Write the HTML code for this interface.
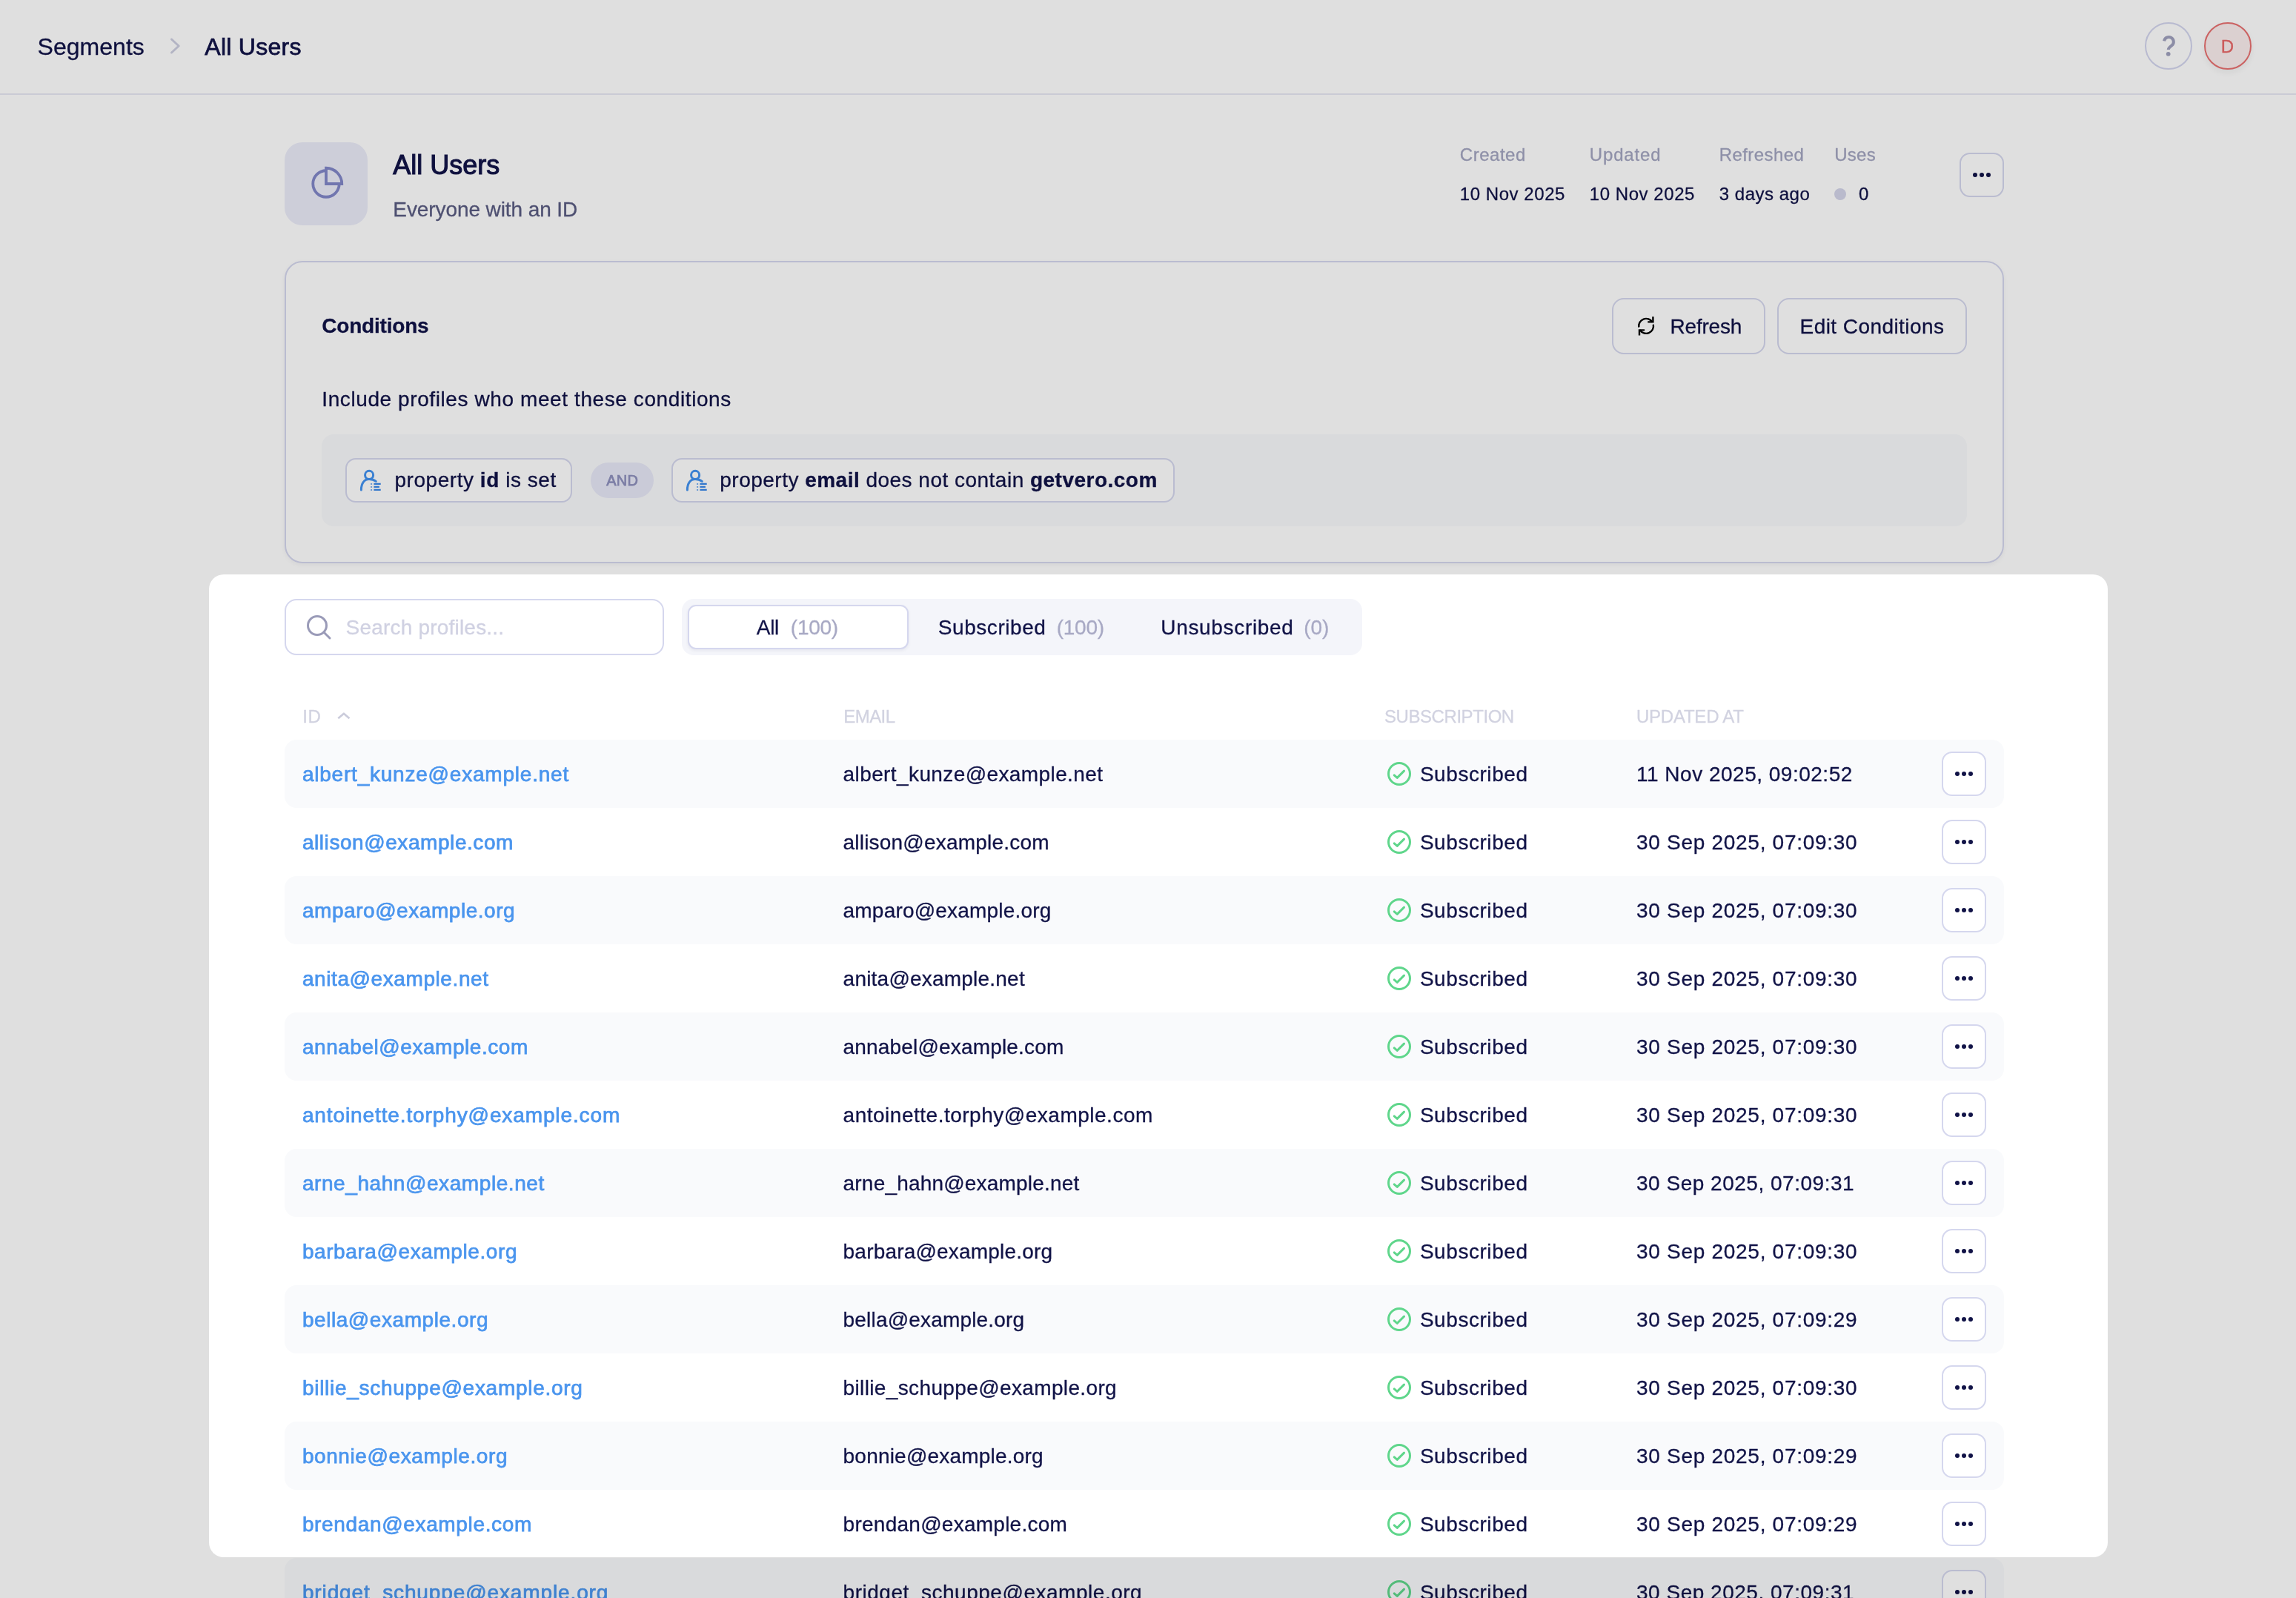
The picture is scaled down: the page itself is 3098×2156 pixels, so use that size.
<!DOCTYPE html>
<html><head><meta charset="utf-8"><title>All Users</title>
<style>
html,body{margin:0;padding:0;}
#root{position:absolute;left:0;top:0;width:3098px;height:2156px;will-change:transform;}
body{width:3098px;height:2156px;overflow:hidden;position:relative;background:#fff;font-family:"Liberation Sans",sans-serif;color:#111347;}
.t{position:absolute;white-space:pre;-webkit-text-stroke:0.3px currentColor;}
.abs{position:absolute;box-sizing:border-box;}
.med{-webkit-text-stroke:0.75px currentColor;}
.bold{font-weight:700;}
.semi{-webkit-text-stroke:1.1px currentColor;}
svg{position:absolute;overflow:visible;}
.btn{position:absolute;box-sizing:border-box;border:2px solid #d5d7ee;border-radius:14px;background:#fff;}
.dots i{position:absolute;width:6.4px;height:6.4px;border-radius:50%;background:#111347;}
.row{position:absolute;left:384px;width:2320px;height:92px;border-radius:16px;}
.row.s{background:#f9fafc;}
.pill{position:absolute;box-sizing:border-box;border:2px solid #d5d7ee;border-radius:14px;top:618px;height:60px;background:#fff;}
</style></head><body><div id="root">

<div class="abs" style="left:0;top:0;width:3098px;height:128px;border-bottom:2px solid #e7e8f4;background:#fff"></div>
<div class="t " style="left:50.6px;top:46.91px;font-size:32px;line-height:32px;letter-spacing:0.017px;">Segments</div>
<svg style="left:226px;top:48px" width="22" height="28" viewBox="0 0 22 28" fill="none"><path d="M5.5 5 L15.2 14 L5.5 23" stroke="#cdcee0" stroke-width="3" stroke-linecap="round" stroke-linejoin="round"/></svg>
<div class="t med" style="left:276.3px;top:46.91px;font-size:32px;line-height:32px;letter-spacing:0.273px;">All Users</div>
<div class="abs" style="left:2894px;top:30px;width:64px;height:64px;border-radius:50%;border:2px solid #d3d5ee;"></div>
<svg style="left:2906px;top:40px" width="40" height="44" viewBox="2906 40 40 44" fill="none"><path d="M2920.1 55.4 A6.4 6.4 0 1 1 2930.6 61.2 C2927.6 63.4 2925.8 64.4 2925.8 67" stroke="#a0a2be" stroke-width="4" stroke-linecap="butt"/><circle cx="2925.7" cy="72.8" r="2.9" fill="#a0a2be"/></svg>
<div class="abs" style="left:2974px;top:30px;width:64px;height:64px;border-radius:50%;border:2px solid #e87070;background:#fbeeee;box-shadow:0 4px 8px rgba(0,0,0,0.06)"></div>
<div class="t " style="left:2973.3px;top:50.68px;font-size:24px;line-height:24px;color:#e96868;width:64px;text-align:center;">D</div>
<div class="abs" style="left:384px;top:192px;width:112px;height:112px;border-radius:24px;background:#ebecf9;"></div>
<svg style="left:410px;top:218px" width="60" height="60" viewBox="410 218 60 60" fill="none" stroke="#8287c8" stroke-width="3.8" stroke-linejoin="miter"><path d="M440 230.25 A17.75 17.75 0 1 0 457.75 248"/><path d="M440 248 V226.75 A21.25 21.25 0 0 1 461.25 248 Z"/></svg>
<div class="t semi" style="left:530.3px;top:204.53px;font-size:36px;line-height:36px;letter-spacing:-0.004px;">All Users</div>
<div class="t " style="left:530.3px;top:268.80px;font-size:28px;line-height:28px;letter-spacing:-0.088px;color:#5a5c82;">Everyone with an ID</div>
<div class="t " style="left:1969.8px;top:196.88px;font-size:24px;line-height:24px;letter-spacing:0.518px;color:#a3a5c0;">Created</div>
<div class="t " style="left:1969.8px;top:249.68px;font-size:24px;line-height:24px;letter-spacing:0.549px;">10 Nov 2025</div>
<div class="t " style="left:2144.8px;top:196.88px;font-size:24px;line-height:24px;letter-spacing:0.842px;color:#a3a5c0;">Updated</div>
<div class="t " style="left:2144.8px;top:249.68px;font-size:24px;line-height:24px;letter-spacing:0.549px;">10 Nov 2025</div>
<div class="t " style="left:2319.8px;top:196.88px;font-size:24px;line-height:24px;letter-spacing:0.408px;color:#a3a5c0;">Refreshed</div>
<div class="t " style="left:2319.8px;top:249.68px;font-size:24px;line-height:24px;letter-spacing:0.509px;">3 days ago</div>
<div class="t " style="left:2475.3px;top:196.88px;font-size:24px;line-height:24px;letter-spacing:0.237px;color:#a3a5c0;">Uses</div>
<div class="abs" style="left:2475px;top:254px;width:16px;height:16px;border-radius:50%;background:#d4d5ea"></div>
<div class="t " style="left:2508.0px;top:249.68px;font-size:24px;line-height:24px;">0</div>
<div class="btn dots" style="left:2644px;top:206px;width:60px;height:60px;background:transparent"><i style="left:15.8px;top:24.8px"></i><i style="left:24.8px;top:24.8px"></i><i style="left:33.8px;top:24.8px"></i></div>
<div class="abs" style="left:384px;top:352px;width:2320px;height:408px;border-radius:24px;border:2px solid #d5d7ee;box-shadow:0 2px 6px rgba(20,20,60,0.05)"></div>
<div class="t bold" style="left:434.3px;top:426.30px;font-size:28px;line-height:28px;letter-spacing:-0.211px;">Conditions</div>
<div class="btn" style="left:2175px;top:402px;width:207px;height:76px;border-radius:16px;background:transparent"></div>
<svg style="left:2195px;top:415px" width="60" height="50" viewBox="2195 415 60 50" fill="none" stroke="#000" stroke-width="2.4" stroke-linecap="butt" stroke-linejoin="miter">
<path d="M2211.3 441.45 A9.9 9.9 0 0 1 2229.5 434.65"/><path d="M2230.4 427.2 V434.4 H2223.3"/>
<path d="M2230.8 437.8 A9.9 9.9 0 0 1 2212.7 445.15"/><path d="M2212 452.4 V445.4 H2219.1"/></svg>
<div class="t " style="left:2253.6px;top:426.60px;font-size:28px;line-height:28px;letter-spacing:-0.224px;">Refresh</div>
<div class="btn" style="left:2398px;top:402px;width:256px;height:76px;border-radius:16px;background:transparent"></div>
<div class="t " style="left:2428.6px;top:426.60px;font-size:28px;line-height:28px;letter-spacing:0.433px;">Edit Conditions</div>
<div class="t " style="left:434.3px;top:524.70px;font-size:28px;line-height:28px;letter-spacing:0.594px;">Include profiles who meet these conditions</div>
<div class="abs" style="left:434px;top:586px;width:2220px;height:124px;border-radius:16px;background:#f9fafc"></div>
<div class="pill" style="left:466px;width:306px;"></div>
<svg class="uicon" style="left:476px;top:624px" width="50" height="50" viewBox="0 0 50 50" fill="none">
<circle cx="22.1" cy="16.9" r="5.55" stroke="#4393f0" stroke-width="3"/>
<path d="M11.4 36.9 C11.4 28 15.6 22.6 22 22.6 C26 22.6 28.8 23.6 31.3 25.4" stroke="#4393f0" stroke-width="3" stroke-linecap="round"/>
<path d="M28.4 28.9H37.7 M28.4 32.9H35.9 M28.4 36.9H37.7" stroke="#3a88ea" stroke-width="2.1" stroke-linecap="butt"/>
<path d="M24.1 27.9h2v2h-2z M24.1 31.9h2v2h-2z M24.1 35.9h2v2h-2z" fill="#78aef0"/>
</svg>
<div class="t " style="left:532.5px;top:634.30px;font-size:28px;line-height:28px;letter-spacing:0.539px;">property <b>id</b> is set</div>
<div class="abs" style="left:797px;top:624px;width:85px;height:48px;border-radius:24px;background:#e7e8f7"></div>
<div class="t med" style="left:818.3px;top:638.37px;font-size:20px;line-height:20px;letter-spacing:0.183px;color:#8e90bd;">AND</div>
<div class="pill" style="left:906px;width:679px;"></div>
<svg class="uicon" style="left:916px;top:624px" width="50" height="50" viewBox="0 0 50 50" fill="none">
<circle cx="22.1" cy="16.9" r="5.55" stroke="#4393f0" stroke-width="3"/>
<path d="M11.4 36.9 C11.4 28 15.6 22.6 22 22.6 C26 22.6 28.8 23.6 31.3 25.4" stroke="#4393f0" stroke-width="3" stroke-linecap="round"/>
<path d="M28.4 28.9H37.7 M28.4 32.9H35.9 M28.4 36.9H37.7" stroke="#3a88ea" stroke-width="2.1" stroke-linecap="butt"/>
<path d="M24.1 27.9h2v2h-2z M24.1 31.9h2v2h-2z M24.1 35.9h2v2h-2z" fill="#78aef0"/>
</svg>
<div class="t " style="left:971.3px;top:634.30px;font-size:28px;line-height:28px;letter-spacing:0.484px;">property <b>email</b> does not contain <b>getvero.com</b></div>
<div class="abs" style="left:384px;top:808px;width:512px;height:76px;border-radius:16px;border:2px solid #d5d7ee;background:#fff"></div>
<svg style="left:408px;top:824px" width="44" height="44" viewBox="408 824 44 44" fill="none" stroke="#9a9bb8" stroke-width="3" stroke-linecap="round"><circle cx="428" cy="844" r="12.5"/><path d="M437.2 853.2 L445 861"/></svg>
<div class="t " style="left:466.5px;top:833.00px;font-size:28px;line-height:28px;letter-spacing:0.205px;color:#d0d1e2;">Search profiles...</div>
<div class="abs" style="left:920px;top:808px;width:918px;height:76px;border-radius:16px;background:#f4f5fa"></div>
<div class="abs" style="left:928px;top:816px;width:298px;height:60px;border-radius:11px;border:2px solid #d5d7ee;background:#fff;box-shadow:0 2px 4px rgba(20,20,60,0.06)"></div>
<div class="t " style="left:1020.8px;top:833.00px;font-size:28px;line-height:28px;letter-spacing:-0.312px;">All</div>
<div class="t " style="left:1066.8px;top:833.00px;font-size:28px;line-height:28px;letter-spacing:-0.244px;color:#a8a9c4;">(100)</div>
<div class="t " style="left:1265.8px;top:833.00px;font-size:28px;line-height:28px;letter-spacing:0.556px;">Subscribed</div>
<div class="t " style="left:1425.8px;top:833.00px;font-size:28px;line-height:28px;letter-spacing:-0.294px;color:#a8a9c4;">(100)</div>
<div class="t " style="left:1566.3px;top:833.00px;font-size:28px;line-height:28px;letter-spacing:0.672px;">Unsubscribed</div>
<div class="t " style="left:1759.3px;top:833.00px;font-size:28px;line-height:28px;letter-spacing:-0.117px;color:#a8a9c4;">(0)</div>
<div class="t " style="left:408.2px;top:954.98px;font-size:24px;line-height:24px;letter-spacing:0.600px;color:#d1d2e0;">ID</div>
<svg style="left:452px;top:956px" width="24" height="20" viewBox="452 956 24 20" fill="none"><path d="M456.3 969.3 L463.9 962.7 L471.5 969.3" stroke="#cbccdb" stroke-width="2.7" stroke-linecap="butt" stroke-linejoin="round"/></svg>
<div class="t " style="left:1138.3px;top:955.18px;font-size:24px;line-height:24px;letter-spacing:-0.583px;color:#d1d2e0;">EMAIL</div>
<div class="t " style="left:1868.0px;top:955.18px;font-size:24px;line-height:24px;letter-spacing:-0.439px;color:#d1d2e0;">SUBSCRIPTION</div>
<div class="t " style="left:2208.0px;top:955.18px;font-size:24px;line-height:24px;letter-spacing:-0.238px;color:#d1d2e0;">UPDATED AT</div>
<div class="row s" style="top:998px"></div>
<div class="t med" style="left:407.9px;top:1030.70px;font-size:28px;line-height:28px;letter-spacing:0.783px;color:#4a95ee;">albert_kunze@example.net</div>
<div class="t " style="left:1137.6px;top:1030.70px;font-size:28px;line-height:28px;letter-spacing:0.396px;">albert_kunze@example.net</div>
<svg style="left:1868px;top:1024px" width="40" height="40" viewBox="1868 1024 40 40" fill="none" stroke="#5fd68b" stroke-width="3" stroke-linecap="round" stroke-linejoin="round"><circle cx="1888" cy="1044" r="14.5"/><path d="M1881.2 1045.9 L1885.2 1049.4 L1894.5 1040.1"/></svg>
<div class="t " style="left:1915.9px;top:1030.70px;font-size:28px;line-height:28px;letter-spacing:0.556px;">Subscribed</div>
<div class="t " style="left:2208.0px;top:1030.70px;font-size:28px;line-height:28px;letter-spacing:0.502px;">11 Nov 2025, 09:02:52</div>
<div class="btn dots" style="left:2620px;top:1014px;width:60px;height:60px;"><i style="left:15.8px;top:24.8px"></i><i style="left:24.8px;top:24.8px"></i><i style="left:33.8px;top:24.8px"></i></div>
<div class="row" style="top:1090px"></div>
<div class="t med" style="left:407.9px;top:1122.70px;font-size:28px;line-height:28px;letter-spacing:0.566px;color:#4a95ee;">allison@example.com</div>
<div class="t " style="left:1137.6px;top:1122.70px;font-size:28px;line-height:28px;letter-spacing:0.199px;">allison@example.com</div>
<svg style="left:1868px;top:1116px" width="40" height="40" viewBox="1868 1024 40 40" fill="none" stroke="#5fd68b" stroke-width="3" stroke-linecap="round" stroke-linejoin="round"><circle cx="1888" cy="1044" r="14.5"/><path d="M1881.2 1045.9 L1885.2 1049.4 L1894.5 1040.1"/></svg>
<div class="t " style="left:1915.9px;top:1122.70px;font-size:28px;line-height:28px;letter-spacing:0.556px;">Subscribed</div>
<div class="t " style="left:2208.0px;top:1122.70px;font-size:28px;line-height:28px;letter-spacing:0.711px;">30 Sep 2025, 07:09:30</div>
<div class="btn dots" style="left:2620px;top:1106px;width:60px;height:60px;"><i style="left:15.8px;top:24.8px"></i><i style="left:24.8px;top:24.8px"></i><i style="left:33.8px;top:24.8px"></i></div>
<div class="row s" style="top:1182px"></div>
<div class="t med" style="left:407.9px;top:1214.70px;font-size:28px;line-height:28px;letter-spacing:0.550px;color:#4a95ee;">amparo@example.org</div>
<div class="t " style="left:1137.6px;top:1214.70px;font-size:28px;line-height:28px;letter-spacing:0.191px;">amparo@example.org</div>
<svg style="left:1868px;top:1208px" width="40" height="40" viewBox="1868 1024 40 40" fill="none" stroke="#5fd68b" stroke-width="3" stroke-linecap="round" stroke-linejoin="round"><circle cx="1888" cy="1044" r="14.5"/><path d="M1881.2 1045.9 L1885.2 1049.4 L1894.5 1040.1"/></svg>
<div class="t " style="left:1915.9px;top:1214.70px;font-size:28px;line-height:28px;letter-spacing:0.556px;">Subscribed</div>
<div class="t " style="left:2208.0px;top:1214.70px;font-size:28px;line-height:28px;letter-spacing:0.711px;">30 Sep 2025, 07:09:30</div>
<div class="btn dots" style="left:2620px;top:1198px;width:60px;height:60px;"><i style="left:15.8px;top:24.8px"></i><i style="left:24.8px;top:24.8px"></i><i style="left:33.8px;top:24.8px"></i></div>
<div class="row" style="top:1274px"></div>
<div class="t med" style="left:407.9px;top:1306.70px;font-size:28px;line-height:28px;letter-spacing:0.588px;color:#4a95ee;">anita@example.net</div>
<div class="t " style="left:1137.6px;top:1306.70px;font-size:28px;line-height:28px;letter-spacing:0.213px;">anita@example.net</div>
<svg style="left:1868px;top:1300px" width="40" height="40" viewBox="1868 1024 40 40" fill="none" stroke="#5fd68b" stroke-width="3" stroke-linecap="round" stroke-linejoin="round"><circle cx="1888" cy="1044" r="14.5"/><path d="M1881.2 1045.9 L1885.2 1049.4 L1894.5 1040.1"/></svg>
<div class="t " style="left:1915.9px;top:1306.70px;font-size:28px;line-height:28px;letter-spacing:0.556px;">Subscribed</div>
<div class="t " style="left:2208.0px;top:1306.70px;font-size:28px;line-height:28px;letter-spacing:0.711px;">30 Sep 2025, 07:09:30</div>
<div class="btn dots" style="left:2620px;top:1290px;width:60px;height:60px;"><i style="left:15.8px;top:24.8px"></i><i style="left:24.8px;top:24.8px"></i><i style="left:33.8px;top:24.8px"></i></div>
<div class="row s" style="top:1366px"></div>
<div class="t med" style="left:407.9px;top:1398.70px;font-size:28px;line-height:28px;letter-spacing:0.545px;color:#4a95ee;">annabel@example.com</div>
<div class="t " style="left:1137.6px;top:1398.70px;font-size:28px;line-height:28px;letter-spacing:0.173px;">annabel@example.com</div>
<svg style="left:1868px;top:1392px" width="40" height="40" viewBox="1868 1024 40 40" fill="none" stroke="#5fd68b" stroke-width="3" stroke-linecap="round" stroke-linejoin="round"><circle cx="1888" cy="1044" r="14.5"/><path d="M1881.2 1045.9 L1885.2 1049.4 L1894.5 1040.1"/></svg>
<div class="t " style="left:1915.9px;top:1398.70px;font-size:28px;line-height:28px;letter-spacing:0.556px;">Subscribed</div>
<div class="t " style="left:2208.0px;top:1398.70px;font-size:28px;line-height:28px;letter-spacing:0.711px;">30 Sep 2025, 07:09:30</div>
<div class="btn dots" style="left:2620px;top:1382px;width:60px;height:60px;"><i style="left:15.8px;top:24.8px"></i><i style="left:24.8px;top:24.8px"></i><i style="left:33.8px;top:24.8px"></i></div>
<div class="row" style="top:1458px"></div>
<div class="t med" style="left:407.9px;top:1490.70px;font-size:28px;line-height:28px;letter-spacing:0.888px;color:#4a95ee;">antoinette.torphy@example.com</div>
<div class="t " style="left:1137.6px;top:1490.70px;font-size:28px;line-height:28px;letter-spacing:0.506px;">antoinette.torphy@example.com</div>
<svg style="left:1868px;top:1484px" width="40" height="40" viewBox="1868 1024 40 40" fill="none" stroke="#5fd68b" stroke-width="3" stroke-linecap="round" stroke-linejoin="round"><circle cx="1888" cy="1044" r="14.5"/><path d="M1881.2 1045.9 L1885.2 1049.4 L1894.5 1040.1"/></svg>
<div class="t " style="left:1915.9px;top:1490.70px;font-size:28px;line-height:28px;letter-spacing:0.556px;">Subscribed</div>
<div class="t " style="left:2208.0px;top:1490.70px;font-size:28px;line-height:28px;letter-spacing:0.711px;">30 Sep 2025, 07:09:30</div>
<div class="btn dots" style="left:2620px;top:1474px;width:60px;height:60px;"><i style="left:15.8px;top:24.8px"></i><i style="left:24.8px;top:24.8px"></i><i style="left:33.8px;top:24.8px"></i></div>
<div class="row s" style="top:1550px"></div>
<div class="t med" style="left:407.9px;top:1582.70px;font-size:28px;line-height:28px;letter-spacing:0.576px;color:#4a95ee;">arne_hahn@example.net</div>
<div class="t " style="left:1137.6px;top:1582.70px;font-size:28px;line-height:28px;letter-spacing:0.191px;">arne_hahn@example.net</div>
<svg style="left:1868px;top:1576px" width="40" height="40" viewBox="1868 1024 40 40" fill="none" stroke="#5fd68b" stroke-width="3" stroke-linecap="round" stroke-linejoin="round"><circle cx="1888" cy="1044" r="14.5"/><path d="M1881.2 1045.9 L1885.2 1049.4 L1894.5 1040.1"/></svg>
<div class="t " style="left:1915.9px;top:1582.70px;font-size:28px;line-height:28px;letter-spacing:0.556px;">Subscribed</div>
<div class="t " style="left:2208.0px;top:1582.70px;font-size:28px;line-height:28px;letter-spacing:0.511px;">30 Sep 2025, 07:09:31</div>
<div class="btn dots" style="left:2620px;top:1566px;width:60px;height:60px;"><i style="left:15.8px;top:24.8px"></i><i style="left:24.8px;top:24.8px"></i><i style="left:33.8px;top:24.8px"></i></div>
<div class="row" style="top:1642px"></div>
<div class="t med" style="left:407.9px;top:1674.70px;font-size:28px;line-height:28px;letter-spacing:0.588px;color:#4a95ee;">barbara@example.org</div>
<div class="t " style="left:1137.6px;top:1674.70px;font-size:28px;line-height:28px;letter-spacing:0.194px;">barbara@example.org</div>
<svg style="left:1868px;top:1668px" width="40" height="40" viewBox="1868 1024 40 40" fill="none" stroke="#5fd68b" stroke-width="3" stroke-linecap="round" stroke-linejoin="round"><circle cx="1888" cy="1044" r="14.5"/><path d="M1881.2 1045.9 L1885.2 1049.4 L1894.5 1040.1"/></svg>
<div class="t " style="left:1915.9px;top:1674.70px;font-size:28px;line-height:28px;letter-spacing:0.556px;">Subscribed</div>
<div class="t " style="left:2208.0px;top:1674.70px;font-size:28px;line-height:28px;letter-spacing:0.711px;">30 Sep 2025, 07:09:30</div>
<div class="btn dots" style="left:2620px;top:1658px;width:60px;height:60px;"><i style="left:15.8px;top:24.8px"></i><i style="left:24.8px;top:24.8px"></i><i style="left:33.8px;top:24.8px"></i></div>
<div class="row s" style="top:1734px"></div>
<div class="t med" style="left:407.9px;top:1766.70px;font-size:28px;line-height:28px;letter-spacing:0.558px;color:#4a95ee;">bella@example.org</div>
<div class="t " style="left:1137.6px;top:1766.70px;font-size:28px;line-height:28px;letter-spacing:0.177px;">bella@example.org</div>
<svg style="left:1868px;top:1760px" width="40" height="40" viewBox="1868 1024 40 40" fill="none" stroke="#5fd68b" stroke-width="3" stroke-linecap="round" stroke-linejoin="round"><circle cx="1888" cy="1044" r="14.5"/><path d="M1881.2 1045.9 L1885.2 1049.4 L1894.5 1040.1"/></svg>
<div class="t " style="left:1915.9px;top:1766.70px;font-size:28px;line-height:28px;letter-spacing:0.556px;">Subscribed</div>
<div class="t " style="left:2208.0px;top:1766.70px;font-size:28px;line-height:28px;letter-spacing:0.711px;">30 Sep 2025, 07:09:29</div>
<div class="btn dots" style="left:2620px;top:1750px;width:60px;height:60px;"><i style="left:15.8px;top:24.8px"></i><i style="left:24.8px;top:24.8px"></i><i style="left:33.8px;top:24.8px"></i></div>
<div class="row" style="top:1826px"></div>
<div class="t med" style="left:407.9px;top:1858.70px;font-size:28px;line-height:28px;letter-spacing:0.721px;color:#4a95ee;">billie_schuppe@example.org</div>
<div class="t " style="left:1137.6px;top:1858.70px;font-size:28px;line-height:28px;letter-spacing:0.365px;">billie_schuppe@example.org</div>
<svg style="left:1868px;top:1852px" width="40" height="40" viewBox="1868 1024 40 40" fill="none" stroke="#5fd68b" stroke-width="3" stroke-linecap="round" stroke-linejoin="round"><circle cx="1888" cy="1044" r="14.5"/><path d="M1881.2 1045.9 L1885.2 1049.4 L1894.5 1040.1"/></svg>
<div class="t " style="left:1915.9px;top:1858.70px;font-size:28px;line-height:28px;letter-spacing:0.556px;">Subscribed</div>
<div class="t " style="left:2208.0px;top:1858.70px;font-size:28px;line-height:28px;letter-spacing:0.711px;">30 Sep 2025, 07:09:30</div>
<div class="btn dots" style="left:2620px;top:1842px;width:60px;height:60px;"><i style="left:15.8px;top:24.8px"></i><i style="left:24.8px;top:24.8px"></i><i style="left:33.8px;top:24.8px"></i></div>
<div class="row s" style="top:1918px"></div>
<div class="t med" style="left:407.9px;top:1950.70px;font-size:28px;line-height:28px;letter-spacing:0.589px;color:#4a95ee;">bonnie@example.org</div>
<div class="t " style="left:1137.6px;top:1950.70px;font-size:28px;line-height:28px;letter-spacing:0.200px;">bonnie@example.org</div>
<svg style="left:1868px;top:1944px" width="40" height="40" viewBox="1868 1024 40 40" fill="none" stroke="#5fd68b" stroke-width="3" stroke-linecap="round" stroke-linejoin="round"><circle cx="1888" cy="1044" r="14.5"/><path d="M1881.2 1045.9 L1885.2 1049.4 L1894.5 1040.1"/></svg>
<div class="t " style="left:1915.9px;top:1950.70px;font-size:28px;line-height:28px;letter-spacing:0.556px;">Subscribed</div>
<div class="t " style="left:2208.0px;top:1950.70px;font-size:28px;line-height:28px;letter-spacing:0.711px;">30 Sep 2025, 07:09:29</div>
<div class="btn dots" style="left:2620px;top:1934px;width:60px;height:60px;"><i style="left:15.8px;top:24.8px"></i><i style="left:24.8px;top:24.8px"></i><i style="left:33.8px;top:24.8px"></i></div>
<div class="row" style="top:2010px"></div>
<div class="t med" style="left:407.9px;top:2042.70px;font-size:28px;line-height:28px;letter-spacing:0.650px;color:#4a95ee;">brendan@example.com</div>
<div class="t " style="left:1137.6px;top:2042.70px;font-size:28px;line-height:28px;letter-spacing:0.255px;">brendan@example.com</div>
<svg style="left:1868px;top:2036px" width="40" height="40" viewBox="1868 1024 40 40" fill="none" stroke="#5fd68b" stroke-width="3" stroke-linecap="round" stroke-linejoin="round"><circle cx="1888" cy="1044" r="14.5"/><path d="M1881.2 1045.9 L1885.2 1049.4 L1894.5 1040.1"/></svg>
<div class="t " style="left:1915.9px;top:2042.70px;font-size:28px;line-height:28px;letter-spacing:0.556px;">Subscribed</div>
<div class="t " style="left:2208.0px;top:2042.70px;font-size:28px;line-height:28px;letter-spacing:0.711px;">30 Sep 2025, 07:09:29</div>
<div class="btn dots" style="left:2620px;top:2026px;width:60px;height:60px;"><i style="left:15.8px;top:24.8px"></i><i style="left:24.8px;top:24.8px"></i><i style="left:33.8px;top:24.8px"></i></div>
<div class="row s" style="top:2102px"></div>
<div class="t med" style="left:407.9px;top:2134.70px;font-size:28px;line-height:28px;letter-spacing:0.882px;color:#4a95ee;">bridget_schuppe@example.org</div>
<div class="t " style="left:1137.6px;top:2134.70px;font-size:28px;line-height:28px;letter-spacing:0.521px;">bridget_schuppe@example.org</div>
<svg style="left:1868px;top:2128px" width="40" height="40" viewBox="1868 1024 40 40" fill="none" stroke="#5fd68b" stroke-width="3" stroke-linecap="round" stroke-linejoin="round"><circle cx="1888" cy="1044" r="14.5"/><path d="M1881.2 1045.9 L1885.2 1049.4 L1894.5 1040.1"/></svg>
<div class="t " style="left:1915.9px;top:2134.70px;font-size:28px;line-height:28px;letter-spacing:0.556px;">Subscribed</div>
<div class="t " style="left:2208.0px;top:2134.70px;font-size:28px;line-height:28px;letter-spacing:0.511px;">30 Sep 2025, 07:09:31</div>
<div class="btn dots" style="left:2620px;top:2118px;width:60px;height:60px;"><i style="left:15.8px;top:24.8px"></i><i style="left:24.8px;top:24.8px"></i><i style="left:33.8px;top:24.8px"></i></div>
<div class="abs" style="left:282px;top:775px;width:2562px;height:1326px;border-radius:20px;box-shadow:0 0 0 4000px rgba(0,0,0,0.125);pointer-events:none"></div>
</div></body></html>
